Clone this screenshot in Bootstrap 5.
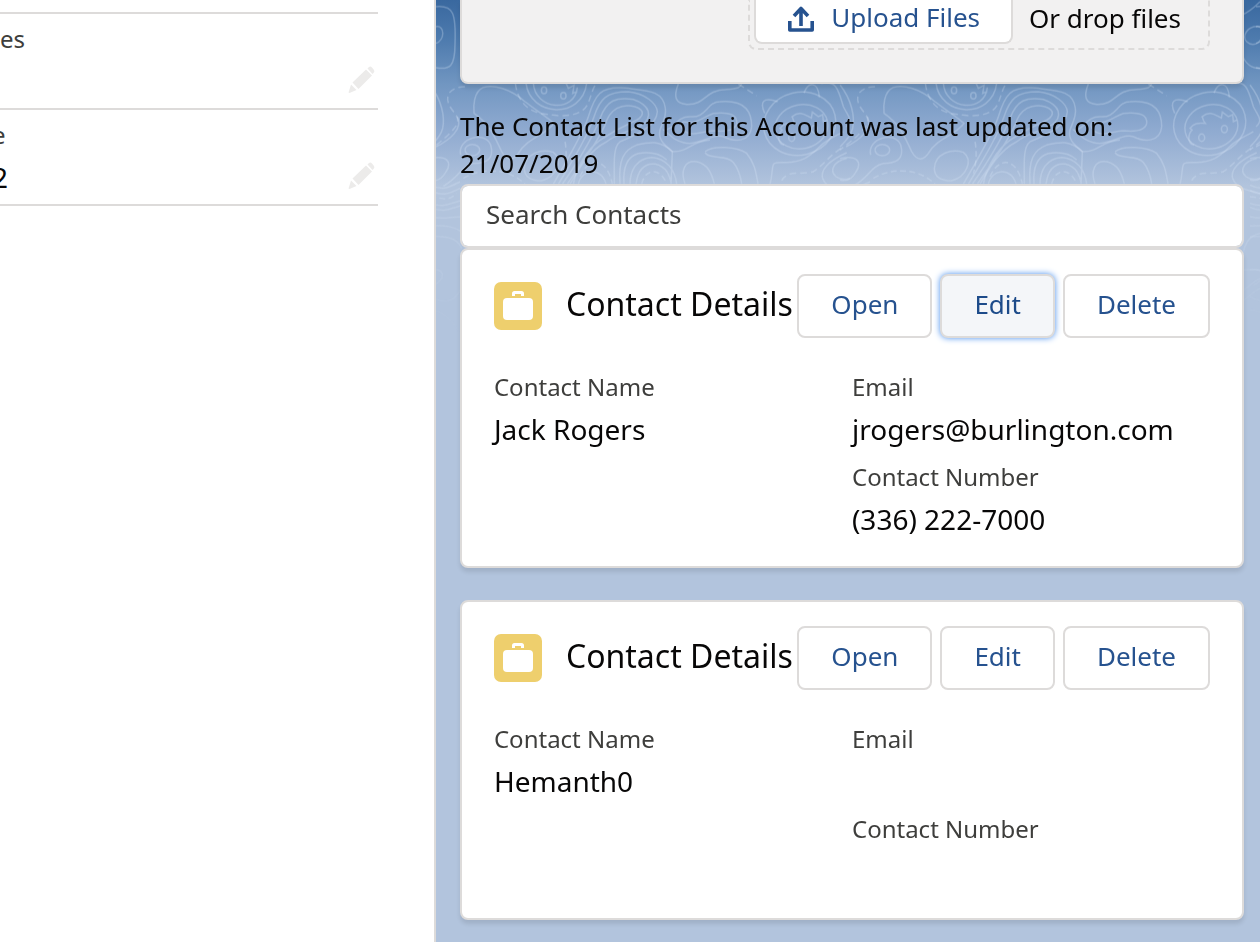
<!DOCTYPE html>
<html lang="en">
<head>
<meta charset="utf-8">
<meta name="viewport" content="width=device-width, initial-scale=1">
<title>Account contacts</title>
<link href="https://cdn.jsdelivr.net/npm/bootstrap@5.3.0/dist/css/bootstrap.min.css" rel="stylesheet">
<style>
body { font-family: "Noto Sans", "Open Sans", sans-serif; font-size: 26px; line-height: 37px; color: #080707; }
.record-pane { width: 34.6%; border-right: 2px solid #dddbda; padding-right: 56px; padding-top: 12px; }
.record-field { height: 96px; border-top: 2px solid #dddbda; padding-top: 8px; }
.record-list { border-bottom: 2px solid #dddbda; }
.cut-left { text-indent: -8px; }
.field-label { font-size: 24px; line-height: 34px; padding-bottom: 5px; color: #3e3e3c; }
.field-value { font-size: 28px; line-height: 40px; min-height: 51px; padding-bottom: 11px; color: #080707; }
.pencil { border: 0; background: none; padding: 0; line-height: 0; margin: 0 3px 14px 0; }
.side-pane { min-height: 100vh; background: linear-gradient(#39689f 0, #4e7bae 40px, #7196c1 84px, #8faad0 130px, #b2c4dd 186px); padding: 0 16px 22px 24px; overflow: hidden; }
.contours { top: 0; left: 0; pointer-events: none; }
.panel { border: 2px solid #dddbda; border-radius: 8px; box-shadow: 0 4px 4px rgba(0,0,0,.1); background: #fff; }
.upload-panel { background: #f2f1f1; border-top: 0; border-radius: 0 0 8px 8px; padding: 0 32px 32px; height: 84px; }
.drop-area { border: 2px dashed #dddbda; border-top: 0; border-radius: 0 0 8px 8px; padding: 0 27px 4px 4px; height: 50px; }
.slds-btn { font-size: 26px; line-height: 36px; height: 64px; padding: 10px 32px 14px; border: 2px solid #dddbda; border-radius: 8px; background: #fff; color: #26528f; }
.slds-btn:hover, .slds-btn.focused { background: #f4f6f9; color: #1d4b8a; border-color: #dddbda; }
.slds-btn.focused { box-shadow: 0 0 6px #4a90ee; }
.upload-btn { height: 44px; line-height: 34px; border-top: 0; border-radius: 0 0 8px 8px; padding: 0 31px 8px; }
.search-box { font-size: 26px; line-height: 38px; height: 64px; padding: 10px 24px 14px; border: 2px solid #dddbda; border-radius: 8px; }
.search-box::placeholder { color: #3e3e3c; opacity: 1; }
.contact-panel { padding: 24px 32px 16px; }
.contact-panel + .contact-panel { margin-top: 32px; }
.contact-panel h2 { font-size: 32px; line-height: 40px; font-weight: 400; padding-bottom: 4px; }
.updated-note { padding-bottom: 2px; }
.case-icon { width: 48px; height: 48px; }
</style>
</head>
<body>
<div class="d-flex">
  <main class="record-pane flex-shrink-0">
    <div class="record-list">
      <div class="record-field d-flex justify-content-between">
        <div><div class="field-label">es</div></div>
        <button class="pencil align-self-end" aria-label="Edit field"><svg width="28" height="28" viewBox="0 0 28 28" fill="#ecebea"><path d="M5.500 16.500 19 3.500l6 6L11.500 23z"/><path d="M1.500 26.500 4 18.500 9.500 24l-7 3z"/><path d="M20.500 2.500 22 1q1.500-1 3 .5L27 4q1 1.500-.5 3l-1 1z"/></svg></button>
      </div>
      <div class="record-field d-flex justify-content-between">
        <div class="cut-left"><div class="field-label">e</div><div class="field-value">2</div></div>
        <button class="pencil align-self-end" aria-label="Edit field"><svg width="28" height="28" viewBox="0 0 28 28" fill="#ecebea"><path d="M5.500 16.500 19 3.500l6 6L11.500 23z"/><path d="M1.500 26.500 4 18.500 9.500 24l-7 3z"/><path d="M20.500 2.500 22 1q1.500-1 3 .5L27 4q1 1.500-.5 3l-1 1z"/></svg></button>
      </div>
    </div>
  </main>

  <aside class="side-pane position-relative flex-grow-1">
    <svg class="contours position-absolute" width="100%" height="340" aria-hidden="true">
      <defs>
        <linearGradient id="fade" x1="0" y1="0" x2="0" y2="1"><stop offset="0" stop-color="#fff"/><stop offset=".5" stop-color="#fff"/><stop offset="1" stop-color="#000"/></linearGradient>
        <mask id="fadeout" maskUnits="userSpaceOnUse" x="0" y="0" width="3000" height="340"><rect width="3000" height="340" fill="url(#fade)"/></mask>
        <g id="tile" transform="scale(.33333)" fill="none" stroke="#dbe8f7" stroke-opacity=".3" stroke-width="4.500">
          <path d="M18 20C70 15 78 40 75 130C75 200 60 210 18 203M18 80C45 75 45 120 18 130"/>
          <path d="M1205 45C1230 35 1245 20 1260 5M1260 80C1220 75 1205 110 1220 125C1230 135 1245 135 1260 125M1205 160C1215 195 1240 205 1260 205"/>
          <path d="M0 255C35 300 45 350 38 385C32 410 15 425 0 440M82 350C100 385 60 420 18 440"/>
          <path stroke-dasharray="20 12" d="M105 260C50 262 45 295 60 320C75 345 90 350 80 375C60 405 30 425 0 450"/>
          <path d="M160 262C130 275 130 320 132 340C175 370 190 400 215 455C235 490 255 475 265 460C290 415 340 410 372 370C350 350 310 325 285 305C240 265 190 253 160 262Z"/>
          <path d="M288 250C300 350 455 360 470 250M310 250C315 330 435 340 442 262M408 250L415 265L432 256L428 280L442 274"/>
          <ellipse cx="342" cy="271" rx="8" ry="10"/><ellipse cx="400" cy="287" rx="8" ry="10"/>
          <path stroke-dasharray="20 12" d="M256 250C262 300 290 335 340 341C410 355 460 345 474 310C485 285 485 270 498 252"/>
          <path d="M370 552C410 480 455 410 475 350C495 285 510 258 585 264C650 272 700 270 706 325C710 350 696 370 690 390C680 425 720 445 727 455"/>
          <path d="M385 552C425 485 470 415 492 350C510 295 530 275 595 275C645 280 680 310 682 335C680 375 630 400 570 425C550 440 552 480 553 552"/>
          <path d="M397 552C440 490 485 420 510 355C530 300 560 290 610 298C660 315 670 350 635 375C600 395 560 400 530 425C480 450 450 500 420 552"/>
          <path d="M412 552C450 495 495 440 525 375C540 325 575 310 615 320C645 330 645 350 610 365C565 385 540 400 510 420C470 450 440 500 430 552"/>
          <path d="M570 552C565 480 580 450 620 435C660 425 690 420 727 455L723 552M582 552C578 500 590 470 625 460C660 455 690 460 710 480M600 552C600 510 620 475 665 472C710 475 735 510 740 552M618 552C625 500 650 490 675 492C710 500 718 525 724 552"/>
          <path d="M445 552C455 505 515 500 528 552"/>
          <path stroke-dasharray="18 10" d="M450 530C475 470 530 470 547 552M635 552C645 505 690 500 710 552M405 425C410 450 410 490 400 520"/>
          <path d="M745 252C730 290 735 310 770 313C830 315 820 270 890 268C930 266 930 260 935 252"/>
          <path stroke-dasharray="20 12" d="M925 252L980 287"/>
          <path d="M702 390C735 390 735 350 780 350C830 355 830 305 870 305C950 298 965 340 965 380C960 430 910 425 880 410C850 400 830 425 780 430C740 430 720 405 702 390Z"/>
          <path d="M760 365C800 375 820 350 850 340C900 335 922 345 920 370C915 395 880 395 850 392C810 395 780 412 760 390C750 380 750 370 760 365Z"/>
          <path d="M727 455C780 455 780 425 840 420M825 455C850 435 920 440 950 460C975 490 978 520 984 552M825 458C840 480 890 462 910 487C928 510 932 530 935 552M765 552C750 510 765 480 800 485C833 492 845 520 853 552"/>
          <ellipse cx="1109" cy="371" rx="109" ry="94" transform="rotate(-14 1109 371)"/>
          <ellipse cx="1114" cy="380" rx="80" ry="66" transform="rotate(-12 1114 380)"/>
          <path d="M1043 305C1000 290 988 305 1004 340M1122 279C1135 243 1165 245 1168 292M1062 435C1040 430 1045 400 1056 390L1050 385C1065 365 1080 370 1096 370C1085 358 1090 352 1086 350C1110 330 1125 345 1144 354L1147 336L1165 350L1178 344L1180 365L1190 360"/>
          <ellipse cx="1085" cy="413" rx="9" ry="11"/><ellipse cx="1153" cy="387" rx="9" ry="11"/>
          <path d="M1174 250C1220 240 1225 270 1240 320C1255 350 1270 360 1248 380M1020 552C1035 490 1015 487 1060 487C1130 490 1150 455 1180 430C1205 410 1225 405 1240 395"/>
          <path stroke-dasharray="20 12" d="M1055 542C1070 510 1110 525 1150 515C1180 495 1200 465 1240 440"/>
          <path d="M1250 458C1200 480 1165 510 1180 540C1195 570 1230 570 1260 580M1250 475C1205 485 1200 515 1218 530C1235 542 1250 538 1260 535"/>
          <ellipse cx="127" cy="450" rx="22" ry="17"/>
          <path d="M92 465C80 415 165 390 182 435C195 480 165 490 130 490C90 500 90 530 40 558M0 475C50 465 68 485 48 515C35 540 20 545 0 540"/>
          <path d="M283 505C285 460 335 445 370 457C400 480 380 530 335 542C300 542 283 530 283 505Z"/>
          <path stroke-dasharray="18 10" d="M100 535C150 505 230 500 285 552M0 590C30 590 50 610 80 580"/>
          <path d="M0 555C40 575 60 560 90 545M0 572C40 590 60 580 90 565M0 610C40 625 60 610 100 600M0 622C40 640 60 625 100 615M0 650C40 660 60 650 100 650M0 678C50 675 75 680 100 700M0 710C60 705 85 720 95 745M0 810C45 800 50 840 10 855M0 890C40 910 70 910 90 870M0 930C30 930 60 950 90 1000"/>
          <path d="M1205 775C1215 725 1230 705 1260 700M1205 812C1220 805 1240 808 1260 810M1205 875C1225 860 1245 840 1260 835M1205 905C1225 890 1245 870 1260 865"/>
        </g>
      </defs>
      <g mask="url(#fadeout)"><use href="#tile" x="-6"/><use href="#tile" x="404"/><use href="#tile" x="814"/><use href="#tile" x="1224"/></g>
    </svg>

    <div class="position-relative">
      <section class="panel upload-panel d-flex justify-content-end mb-4" aria-label="Files">
        <div class="drop-area d-flex align-items-start">
          <button class="btn slds-btn upload-btn d-flex align-items-center">
            <svg class="me-3 mt-1" width="28" height="28" viewBox="0 0 28 28" fill="none" stroke="#26528f" stroke-width="3.600" stroke-linejoin="round" aria-hidden="true"><path d="M2.800 16v9h22.400v-9M14 21V5M7 11l7-7.500L21 11"/></svg>Upload Files
          </button>
          <span class="ms-3">Or drop files</span>
        </div>
      </section>

      <p class="updated-note mb-0">The Contact List for this Account was last updated on:<br>21/07/2019</p>
      <input class="form-control search-box" type="search" placeholder="Search Contacts" aria-label="Search Contacts">

      <article class="panel contact-panel">
        <header class="d-flex align-items-center justify-content-between mb-4 pb-2">
          <div class="d-flex align-items-center text-nowrap">
            <svg class="case-icon me-4" viewBox="0 0 48 48" aria-hidden="true"><rect width="48" height="48" rx="7" fill="#eecf6d"/><path d="M19.500 14v-2.500q0-1 1-1h7q1 0 1 1V14" fill="none" stroke="#fff" stroke-width="3"/><rect x="9" y="16" width="30" height="22" rx="4" fill="#fff"/></svg>
            <h2 class="mb-0">Contact Details</h2>
          </div>
          <div class="d-flex gap-2">
            <button class="btn slds-btn">Open</button>
            <button class="btn slds-btn focused">Edit</button>
            <button class="btn slds-btn">Delete</button>
          </div>
        </header>
        <div class="row g-0">
          <div class="col-6"><div class="field-label">Contact Name</div><div class="field-value">Jack Rogers</div></div>
          <div class="col-6">
            <div class="field-label">Email</div><div class="field-value">jrogers@burlington.com</div>
            <div class="field-label">Contact Number</div><div class="field-value">(336) 222-7000</div>
          </div>
        </div>
      </article>

      <article class="panel contact-panel">
        <header class="d-flex align-items-center justify-content-between mb-4 pb-2">
          <div class="d-flex align-items-center text-nowrap">
            <svg class="case-icon me-4" viewBox="0 0 48 48" aria-hidden="true"><rect width="48" height="48" rx="7" fill="#eecf6d"/><path d="M19.500 14v-2.500q0-1 1-1h7q1 0 1 1V14" fill="none" stroke="#fff" stroke-width="3"/><rect x="9" y="16" width="30" height="22" rx="4" fill="#fff"/></svg>
            <h2 class="mb-0">Contact Details</h2>
          </div>
          <div class="d-flex gap-2">
            <button class="btn slds-btn">Open</button>
            <button class="btn slds-btn">Edit</button>
            <button class="btn slds-btn">Delete</button>
          </div>
        </header>
        <div class="row g-0">
          <div class="col-6"><div class="field-label">Contact Name</div><div class="field-value">Hemanth0</div></div>
          <div class="col-6">
            <div class="field-label">Email</div><div class="field-value"></div>
            <div class="field-label">Contact Number</div><div class="field-value"></div>
          </div>
        </div>
      </article>
    </div>
  </aside>
</div>
<script src="https://cdn.jsdelivr.net/npm/bootstrap@5.3.0/dist/js/bootstrap.bundle.min.js"></script>
</body>
</html>
